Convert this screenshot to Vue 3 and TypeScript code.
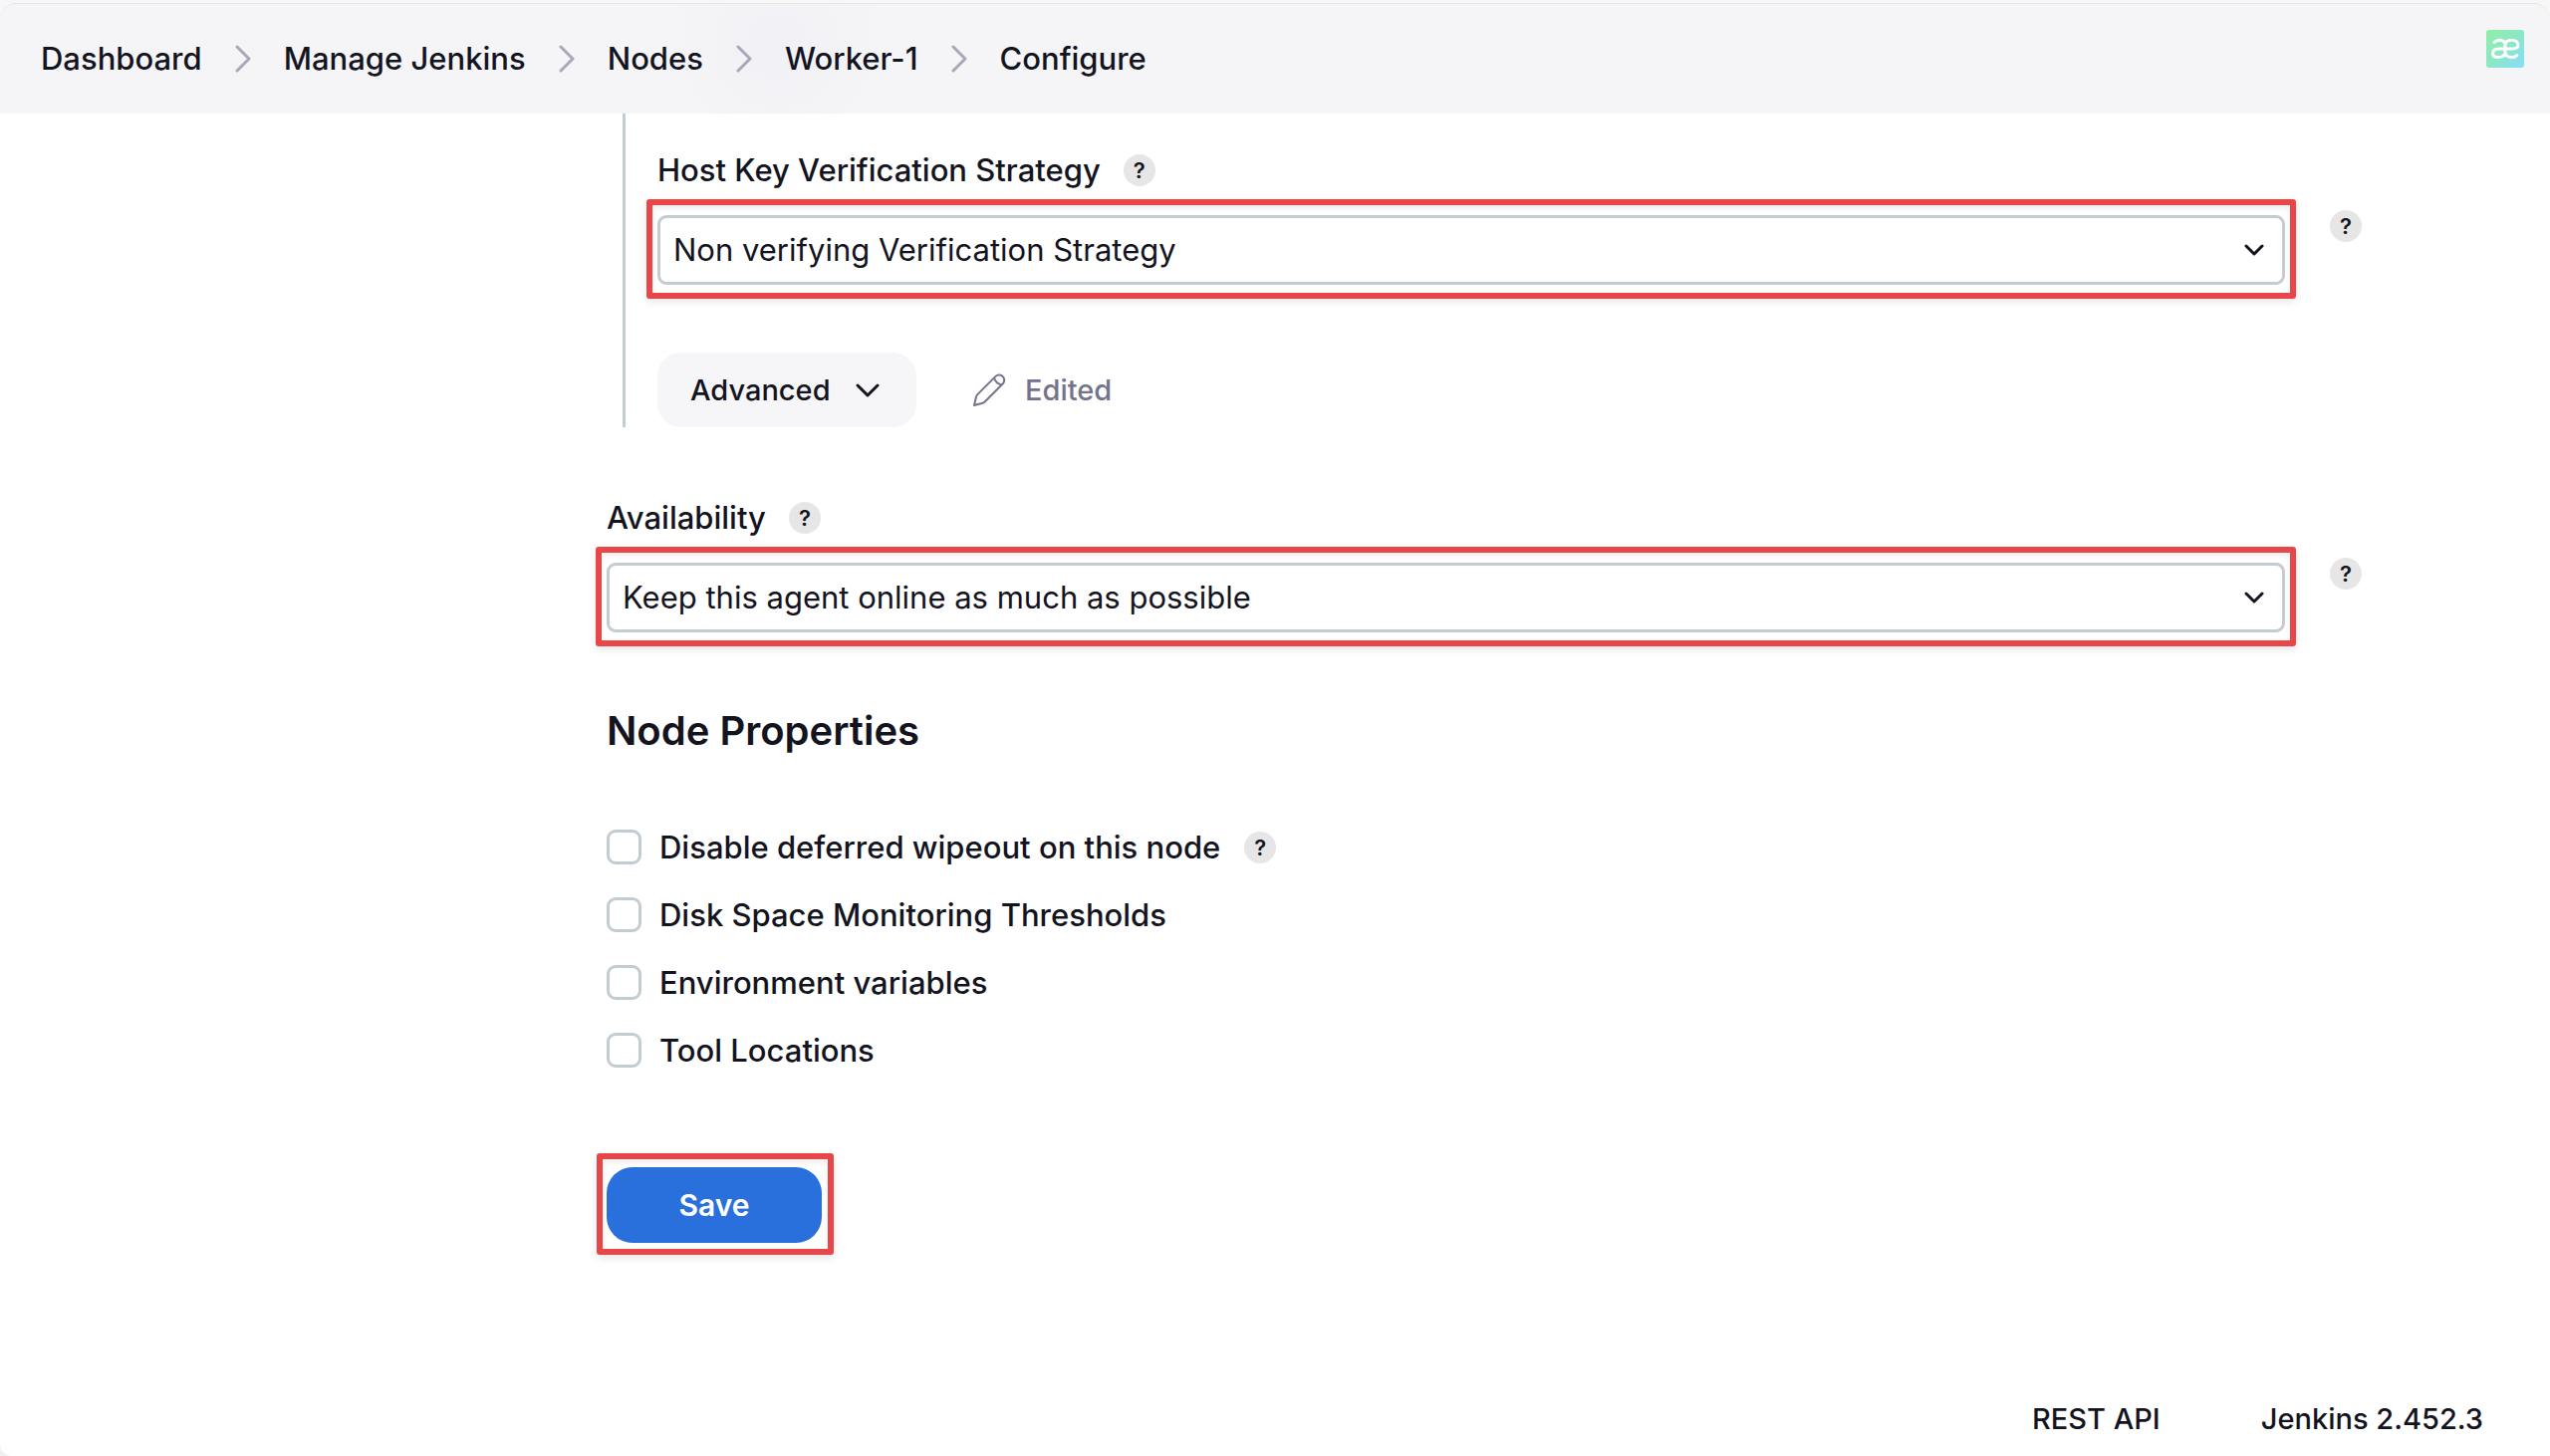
<script setup lang="ts">
import { ref } from 'vue'

interface NodeProperty {
  id: string
  label: string
  help: boolean
  checked: boolean
}

const crumbs: string[] = ['Dashboard', 'Manage Jenkins', 'Nodes', 'Worker-1', 'Configure']

const strategies: string[] = [
  'Non verifying Verification Strategy',
  'Known hosts file Verification Strategy',
  'Manually provided key Verification Strategy',
  'Manually trusted key Verification Strategy',
]
const availabilities: string[] = [
  'Keep this agent online as much as possible',
  'Bring this agent online according to a schedule',
  'Bring this agent online when in demand, and take offline when idle',
]

const strategy = ref(strategies[0])
const availability = ref(availabilities[0])

const properties = ref<NodeProperty[]>([
  { id: 'wipeout', label: 'Disable deferred wipeout on this node', help: true, checked: false },
  { id: 'disk-space', label: 'Disk Space Monitoring Thresholds', help: false, checked: false },
  { id: 'environment', label: 'Environment variables', help: false, checked: false },
  { id: 'tools', label: 'Tool Locations', help: false, checked: false },
])
</script>

<template>
  <div class="page">
    <header class="topbar">
      <nav class="crumbs" aria-label="Breadcrumb">
        <template v-for="(crumb, i) in crumbs" :key="crumb">
          <svg v-if="i > 0" class="crumb-sep" viewBox="0 0 16 28" aria-hidden="true">
            <path d="M2 2 L14 14 L2 26" />
          </svg>
          <a href="#">{{ crumb }}</a>
        </template>
      </nav>
      <svg class="badge" viewBox="0 0 38 38" aria-hidden="true">
        <defs>
          <linearGradient id="badge-fill" x1="0" y1="0" x2="1" y2="1">
            <stop offset="0" stop-color="#8fefa6" />
            <stop offset="0.5" stop-color="#8be8c4" />
            <stop offset="1" stop-color="#86dcff" />
          </linearGradient>
        </defs>
        <rect width="38" height="38" rx="3" fill="url(#badge-fill)" />
        <path
          class="badge-mark"
          d="M8 12.5 C10 10.5 12 10 14 10.2 C17 10.5 19 12.5 19 15.5 V22 C19 25.5 16.5 27.5 12.5 27.5 C8.500 27.5 6.500 26 6.500 23.500 C6.500 20.500 9 19 13 19 H25 C29.500 19 32 18 32 15.200 C32 12 29 10.200 25.500 10.200 C21.500 10.200 19 12 19 15.500 M19 22 C19 25.500 21.500 27.500 25.500 27.500 C28 27.500 29.500 27 31 25.700"
        />
      </svg>
    </header>

    <main class="content">
      <form @submit.prevent>
        <section class="nested">
          <div class="field">
            <div class="field-body">
              <div class="label-row">
                <label for="strategy">Host Key Verification Strategy</label>
                <button type="button" class="help" aria-label="Help for Host Key Verification Strategy">?</button>
              </div>
              <div class="select-box marked">
                <select id="strategy" v-model="strategy">
                  <option v-for="s in strategies" :key="s">{{ s }}</option>
                </select>
                <svg class="select-arrow" viewBox="0 0 20 12" aria-hidden="true"><path d="M2 2 L10 10 L18 2" /></svg>
              </div>
            </div>
            <button type="button" class="help side" aria-label="Help">?</button>
          </div>

          <div class="advanced-row">
            <button type="button" class="advanced">
              Advanced
              <svg viewBox="0 0 24 14" aria-hidden="true"><path d="M2 2 L12 12 L22 2" /></svg>
            </button>
            <span class="edited">
              <svg viewBox="0 0 34 34" aria-hidden="true">
                <path d="M2 32 L4 23.500 Q4.400 22 5.500 20.900 L23.300 3.100 Q25 1.400 27.500 1.600 Q30 1.800 31.300 3.700 Q33.300 7.200 30.800 10.300 L12.900 28.200 Q11.900 29.200 10.400 29.700 Z M22 4.500 Q23.500 9.800 29.500 11.500" />
              </svg>
              Edited
            </span>
          </div>
        </section>

        <div class="field">
          <div class="field-body">
            <div class="label-row">
              <label for="availability">Availability</label>
              <button type="button" class="help" aria-label="Help for Availability">?</button>
            </div>
            <div class="select-box marked">
              <select id="availability" v-model="availability">
                <option v-for="a in availabilities" :key="a">{{ a }}</option>
              </select>
              <svg class="select-arrow" viewBox="0 0 20 12" aria-hidden="true"><path d="M2 2 L10 10 L18 2" /></svg>
            </div>
          </div>
          <button type="button" class="help side" aria-label="Help">?</button>
        </div>

        <h2>Node Properties</h2>

        <ul class="checks">
          <li v-for="p in properties" :key="p.id">
            <input :id="p.id" v-model="p.checked" type="checkbox" />
            <label :for="p.id">{{ p.label }}</label>
            <button v-if="p.help" type="button" class="help" :aria-label="'Help for ' + p.label">?</button>
          </li>
        </ul>

        <div class="save-box marked">
          <button type="submit" class="save">Save</button>
        </div>
      </form>
    </main>

    <footer class="footer">
      <a href="#">REST API</a>
      <a href="#">Jenkins 2.452.3</a>
    </footer>
  </div>
</template>

<style>
body {
  background: #f0f0f0;
}
</style>

<style scoped>
.page {
  box-sizing: border-box;
  display: flex;
  flex-direction: column;
  min-height: 100vh;
  border-top: 3px solid #f7f7f7;
  border-radius: 0 0 0 12px;
  background: linear-gradient(#f7f7f7 0 60px, #fff 60px);
  color: #14141f;
  font-family: Inter, "Liberation Sans", sans-serif;
  font-size: 31px;
  font-weight: 500;
  line-height: 40px;
}

a {
  color: inherit;
  text-decoration: none;
}

button,
select,
input {
  margin: 0;
  font: inherit;
  color: inherit;
}

button {
  border: 0;
  padding: 0;
  cursor: pointer;
}

svg path {
  fill: none;
  stroke: currentColor;
  stroke-width: 3;
  stroke-linecap: round;
  stroke-linejoin: round;
}

/* Top bar */
.topbar {
  box-sizing: border-box;
  display: flex;
  align-items: center;
  justify-content: space-between;
  height: 111px;
  padding: 0 26px 0 41px;
  border-top: 1px solid #e6e6e6;
  border-radius: 16px 16px 0 0;
  background: radial-gradient(circle at 780px 42px, #f1f1f5, #f5f5f8 110px);
}

.crumbs {
  display: flex;
  align-items: center;
  gap: 33px;
}

.crumb-sep {
  width: 16px;
  height: 28px;
  color: #a9a8b8;
}

.badge {
  align-self: flex-start;
  width: 38px;
  height: 38px;
  margin-top: 26px;
}

.badge .badge-mark {
  stroke: #fff;
}

/* Form */
.content {
  padding: 0 189px 0 609px;
}

.nested {
  margin-left: 16px;
  padding: 41px 0 0 32px;
  border-left: 3px solid #c3ccd1;
}

.field {
  display: flex;
  align-items: flex-start;
  gap: 45px;
}

.field-body {
  flex: 1;
}

.label-row {
  display: flex;
  align-items: center;
  gap: 23px;
  height: 32px;
  margin-bottom: 29px;
}

.help {
  flex: none;
  width: 32px;
  height: 32px;
  border-radius: 50%;
  background: #e6e6e6;
  font-size: 22px;
  font-weight: 600;
  line-height: 32px;
  text-align: center;
}

.help.side {
  margin-top: 56px;
}

.select-box {
  display: flex;
}

.select-box select {
  flex: 1;
  height: 70px;
  padding: 0 60px 0 13px;
  appearance: none;
  border: 3px solid #c3ccd1;
  border-radius: 9px;
  background: #fff;
  font-weight: 400;
}

.select-arrow {
  position: absolute;
  top: 29px;
  right: 21px;
  width: 20px;
  height: 12px;
  pointer-events: none;
}

/* Red highlight frame drawn around a control */
.marked {
  position: relative;
}

.marked::after {
  content: "";
  position: absolute;
  inset: -16px -11px -14px;
  border: 6px solid #e84749;
  border-radius: 3px;
  box-shadow: 0 3px 8px rgba(0, 0, 0, 0.1), inset 0 3px 6px rgba(0, 0, 0, 0.08);
  pointer-events: none;
}

.advanced-row {
  display: flex;
  align-items: center;
  gap: 56px;
  margin-top: 68px;
}

.advanced {
  display: flex;
  align-items: center;
  justify-content: space-between;
  box-sizing: border-box;
  width: 260px;
  height: 75px;
  padding: 0 37px 0 33px;
  border-radius: 24px;
  background: #f6f6f9;
  font-size: 29px;
}

.advanced svg {
  width: 24px;
  height: 14px;
}

.edited {
  display: flex;
  align-items: center;
  gap: 19px;
  color: #74738c;
  font-size: 29px;
}

.edited svg {
  width: 34px;
  height: 34px;
}

.edited path {
  stroke-width: 2;
}

.nested + .field {
  margin-top: 75px;
}

h2 {
  margin: 75px 0;
  font-size: 40px;
  font-weight: 600;
  line-height: 48px;
}

.checks {
  display: flex;
  flex-direction: column;
  gap: 33px;
  margin: 0;
  padding: 0;
  list-style: none;
}

.checks li {
  display: flex;
  align-items: center;
  height: 35px;
}

.checks input {
  width: 35px;
  height: 35px;
  appearance: none;
  border: 3px solid #c3ccd1;
  border-radius: 9px;
  background: #fff;
}

.checks label {
  margin: 0 24px 0 18px;
}

.save-box {
  width: max-content;
  margin-top: 100px;
}

.save-box::after {
  inset: -14px -12px -12px -10px;
}

.save {
  display: block;
  width: 216px;
  height: 76px;
  border-radius: 26px;
  background: #2a70dd;
  color: #fff;
  font-size: 30px;
  font-weight: 600;
}

/* Footer */
.footer {
  display: flex;
  justify-content: flex-end;
  gap: 101px;
  margin-top: auto;
  padding: 0 67px 17px;
  font-size: 29px;
}
</style>
